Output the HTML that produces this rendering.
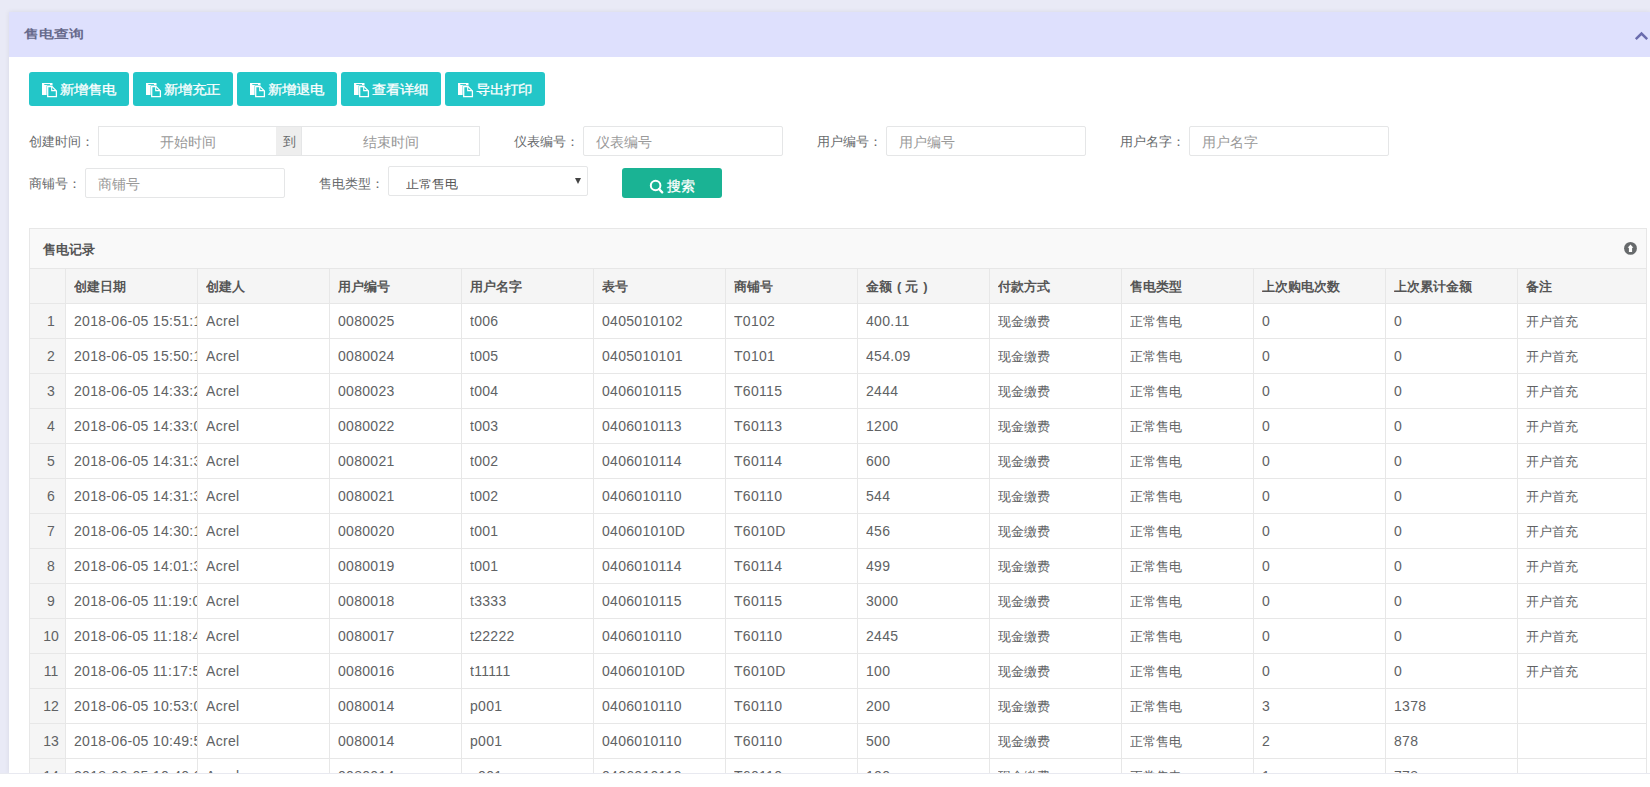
<!DOCTYPE html>
<html><head><meta charset="utf-8">
<style>
*{box-sizing:border-box;margin:0;padding:0}
html,body{width:1650px;height:787px;overflow:hidden;background:#fff;font-family:"Liberation Sans",sans-serif;position:relative}
div,svg{position:absolute}
#bg{left:0;top:0;width:1650px;height:773px;background:#e9eaf6}
#panel{left:9px;top:12px;width:1641px;height:761px;background:#fff;box-shadow:0 0 5px rgba(0,0,0,0.08)}
#phead{left:9px;top:12px;width:1641px;height:45px;background:#dee0fd}
#ptitle{left:24px;top:26px;font-size:14px;font-weight:bold;transform:scale(1.075,0.87);transform-origin:0 0;color:#676a8c;line-height:18px;white-space:nowrap}
#chev{left:1634px;top:31px}
.btn{top:72px;height:34px;width:100px;background:#23c6c8;border-radius:3px;color:#fff;font-size:14px;line-height:34px;white-space:nowrap}
.btn svg{left:12px;top:10px}
.btn span{position:absolute;left:31px;top:1px;-webkit-text-stroke:0.3px #fff;transform:scaleY(0.9);transform-origin:0 50%}
.lbl{font-size:13px;color:#676a6c;line-height:16px;white-space:nowrap}
.inp{height:30px;border-radius:2px;border:1px solid #e5e6e7;background:#fff;font-size:14px;color:#999;line-height:30px;padding-left:12px;white-space:nowrap}
.inp.c{text-align:center;padding-left:0;border-radius:0}
.addon{height:30px;border-top:1px solid #e5e6e7;border-bottom:1px solid #e5e6e7;background:#eee;font-size:13px;color:#676a6c;line-height:29px;text-align:center}
.sel{border-radius:2px;border:1px solid #e5e6e7;background:#fff;overflow:hidden}
.seltxt{position:absolute;left:17px;top:12px;font-size:13px;line-height:16px;color:#555;height:12px;overflow:hidden}
.seltxt b{font-weight:normal;position:relative;top:-3px;display:block;white-space:nowrap}
.arr{position:absolute;left:186px;top:11px;width:0;height:0;border-left:3.5px solid transparent;border-right:3.5px solid transparent;border-top:6px solid #444}
.sbtn{width:100px;height:30px;background:#1ab394;border-radius:3px;color:#fff;font-size:14px;line-height:30px}
.sbtn svg{left:26px;top:9px}
.sbtn span{position:absolute;left:45px;top:3px;-webkit-text-stroke:0.3px #fff}
#tpanel{left:29px;top:228px;width:1618px;height:600px;border:1px solid #e7e7e7;background:#f9f9f9}
#ttitle{left:43px;top:242px;font-size:13px;font-weight:bold;color:#555;line-height:16px;white-space:nowrap}
#upic{left:1623px;top:241px}
.hl{left:29px;width:1618px;height:1px;background:#e7e7e7}
.vl{width:1px;background:#e7e7e7}
.th{height:35px;line-height:37px;font-size:13px;font-weight:bold;color:#555;white-space:nowrap;overflow:hidden}
.td{height:35px;line-height:37px;font-size:14px;color:#606264;letter-spacing:0.3px;white-space:nowrap;overflow:hidden}
.num{height:35px;line-height:37px;font-size:14px;color:#606264;text-align:center}
#white{left:0;top:773px;width:1650px;height:14px;background:#fff;border-top:1px solid #e8e9f0}
.th i{font-style:normal;margin:0 4px 0 5px}
.td.cj{font-size:13px;letter-spacing:0}
</style></head><body>
<div id="bg"></div><div id="panel"></div><div id="phead"></div>
<div id="ptitle">售电查询</div>
<svg id="chev" width="16" height="12" viewBox="0 0 16 12"><path d="M1.8 8.2 L7.5 2.6 L13.2 8.2" fill="none" stroke="#6a6cae" stroke-width="2.5"/></svg>
<div class="btn" style="left:29px"><svg width="18" height="17" viewBox="0 0 18 17"><path d="M1 1h10.5v3H6v9H1z" fill="#fff"/><rect x="3.3" y="2.1" width="5.7" height="0.9" fill="#23c6c8"/><path d="M5.6 3.5h6l4.8 4.8V15.5h-10.8z" fill="#23c6c8"/><path d="M6.7 4.6h4.4l4.3 4.3v5.8H6.7z" fill="none" stroke="#fff" stroke-width="1.3"/><path d="M10.7 4.3v4.3h4.4" fill="none" stroke="#fff" stroke-width="1.1"/></svg><span>新增售电</span></div>
<div class="btn" style="left:133px"><svg width="18" height="17" viewBox="0 0 18 17"><path d="M1 1h10.5v3H6v9H1z" fill="#fff"/><rect x="3.3" y="2.1" width="5.7" height="0.9" fill="#23c6c8"/><path d="M5.6 3.5h6l4.8 4.8V15.5h-10.8z" fill="#23c6c8"/><path d="M6.7 4.6h4.4l4.3 4.3v5.8H6.7z" fill="none" stroke="#fff" stroke-width="1.3"/><path d="M10.7 4.3v4.3h4.4" fill="none" stroke="#fff" stroke-width="1.1"/></svg><span>新增充正</span></div>
<div class="btn" style="left:237px"><svg width="18" height="17" viewBox="0 0 18 17"><path d="M1 1h10.5v3H6v9H1z" fill="#fff"/><rect x="3.3" y="2.1" width="5.7" height="0.9" fill="#23c6c8"/><path d="M5.6 3.5h6l4.8 4.8V15.5h-10.8z" fill="#23c6c8"/><path d="M6.7 4.6h4.4l4.3 4.3v5.8H6.7z" fill="none" stroke="#fff" stroke-width="1.3"/><path d="M10.7 4.3v4.3h4.4" fill="none" stroke="#fff" stroke-width="1.1"/></svg><span>新增退电</span></div>
<div class="btn" style="left:341px"><svg width="18" height="17" viewBox="0 0 18 17"><path d="M1 1h10.5v3H6v9H1z" fill="#fff"/><rect x="3.3" y="2.1" width="5.7" height="0.9" fill="#23c6c8"/><path d="M5.6 3.5h6l4.8 4.8V15.5h-10.8z" fill="#23c6c8"/><path d="M6.7 4.6h4.4l4.3 4.3v5.8H6.7z" fill="none" stroke="#fff" stroke-width="1.3"/><path d="M10.7 4.3v4.3h4.4" fill="none" stroke="#fff" stroke-width="1.1"/></svg><span>查看详细</span></div>
<div class="btn" style="left:445px"><svg width="18" height="17" viewBox="0 0 18 17"><path d="M1 1h10.5v3H6v9H1z" fill="#fff"/><rect x="3.3" y="2.1" width="5.7" height="0.9" fill="#23c6c8"/><path d="M5.6 3.5h6l4.8 4.8V15.5h-10.8z" fill="#23c6c8"/><path d="M6.7 4.6h4.4l4.3 4.3v5.8H6.7z" fill="none" stroke="#fff" stroke-width="1.3"/><path d="M10.7 4.3v4.3h4.4" fill="none" stroke="#fff" stroke-width="1.1"/></svg><span>导出打印</span></div>
<div class="lbl" style="left:29px;top:134px">创建时间：</div>
<div class="inp c" style="left:98px;top:126px;width:179px">开始时间</div>
<div class="addon" style="left:276px;top:126px;width:26px">到</div>
<div class="inp c" style="left:301px;top:126px;width:179px">结束时间</div>
<div class="lbl" style="left:514px;top:134px">仪表编号：</div>
<div class="inp" style="left:583px;top:126px;width:200px">仪表编号</div>
<div class="lbl" style="left:817px;top:134px">用户编号：</div>
<div class="inp" style="left:886px;top:126px;width:200px">用户编号</div>
<div class="lbl" style="left:1120px;top:134px">用户名字：</div>
<div class="inp" style="left:1189px;top:126px;width:200px">用户名字</div>
<div class="lbl" style="left:29px;top:176px">商铺号：</div>
<div class="inp" style="left:85px;top:168px;width:200px">商铺号</div>
<div class="lbl" style="left:319px;top:176px">售电类型：</div>
<div class="sel" style="left:388px;top:166px;width:200px;height:30px"><span class="seltxt"><b>正常售电</b></span><span class="arr"></span></div>
<div class="sbtn" style="left:622px;top:168px"><svg width="18" height="18" viewBox="0 0 18 18"><circle cx="7.6" cy="8.5" r="4.8" fill="none" stroke="#fff" stroke-width="2"/><path d="M11 12l3.2 3.3" stroke="#fff" stroke-width="2.4" stroke-linecap="round"/></svg><span>搜索</span></div>
<div id="tpanel"></div>
<div id="ttitle">售电记录</div>
<svg id="upic" width="16" height="16" viewBox="0 0 16 16"><circle cx="7.5" cy="7.4" r="6.4" fill="#676a6c"/><path d="M7.5 3.5 L10.4 6.8 H9.1 V10.9 H5.9 V6.8 H4.6 Z" fill="#fff"/></svg>
<div style="position:absolute;left:30px;top:268px;width:1616px;height:505px;background:#fff"></div>
<div style="position:absolute;left:30px;top:268px;width:1616px;height:35px;background:#f5f5f5"></div>
<div style="position:absolute;left:30px;top:268px;width:35px;height:505px;background:#f5f5f5"></div>
<div class="hl" style="top:268px"></div>
<div class="hl" style="top:303px"></div>
<div class="hl" style="top:338px"></div>
<div class="hl" style="top:373px"></div>
<div class="hl" style="top:408px"></div>
<div class="hl" style="top:443px"></div>
<div class="hl" style="top:478px"></div>
<div class="hl" style="top:513px"></div>
<div class="hl" style="top:548px"></div>
<div class="hl" style="top:583px"></div>
<div class="hl" style="top:618px"></div>
<div class="hl" style="top:653px"></div>
<div class="hl" style="top:688px"></div>
<div class="hl" style="top:723px"></div>
<div class="hl" style="top:758px"></div>
<div class="vl" style="left:29px;top:268px;height:505px"></div>
<div class="vl" style="left:65px;top:268px;height:505px"></div>
<div class="vl" style="left:197px;top:268px;height:505px"></div>
<div class="vl" style="left:329px;top:268px;height:505px"></div>
<div class="vl" style="left:461px;top:268px;height:505px"></div>
<div class="vl" style="left:593px;top:268px;height:505px"></div>
<div class="vl" style="left:725px;top:268px;height:505px"></div>
<div class="vl" style="left:857px;top:268px;height:505px"></div>
<div class="vl" style="left:989px;top:268px;height:505px"></div>
<div class="vl" style="left:1121px;top:268px;height:505px"></div>
<div class="vl" style="left:1253px;top:268px;height:505px"></div>
<div class="vl" style="left:1385px;top:268px;height:505px"></div>
<div class="vl" style="left:1517px;top:268px;height:505px"></div>
<div class="vl" style="left:1646px;top:268px;height:505px"></div>
<div class="th" style="left:74px;top:268px;width:123px">创建日期</div>
<div class="th" style="left:206px;top:268px;width:123px">创建人</div>
<div class="th" style="left:338px;top:268px;width:123px">用户编号</div>
<div class="th" style="left:470px;top:268px;width:123px">用户名字</div>
<div class="th" style="left:602px;top:268px;width:123px">表号</div>
<div class="th" style="left:734px;top:268px;width:123px">商铺号</div>
<div class="th" style="left:866px;top:268px;width:123px">金额<i>(</i>元<i>)</i></div>
<div class="th" style="left:998px;top:268px;width:123px">付款方式</div>
<div class="th" style="left:1130px;top:268px;width:123px">售电类型</div>
<div class="th" style="left:1262px;top:268px;width:123px">上次购电次数</div>
<div class="th" style="left:1394px;top:268px;width:123px">上次累计金额</div>
<div class="th" style="left:1526px;top:268px;width:120px">备注</div>
<div class="num" style="left:37px;top:303px;width:28px">1</div>
<div class="td" style="left:74px;top:303px;width:123px">2018-06-05 15:51:1</div>
<div class="td" style="left:206px;top:303px;width:123px">Acrel</div>
<div class="td" style="left:338px;top:303px;width:123px">0080025</div>
<div class="td" style="left:470px;top:303px;width:123px">t006</div>
<div class="td" style="left:602px;top:303px;width:123px">0405010102</div>
<div class="td" style="left:734px;top:303px;width:123px">T0102</div>
<div class="td" style="left:866px;top:303px;width:123px">400.11</div>
<div class="td cj" style="left:998px;top:303px;width:123px">现金缴费</div>
<div class="td cj" style="left:1130px;top:303px;width:123px">正常售电</div>
<div class="td" style="left:1262px;top:303px;width:123px">0</div>
<div class="td" style="left:1394px;top:303px;width:123px">0</div>
<div class="td cj" style="left:1526px;top:303px;width:120px">开户首充</div>
<div class="num" style="left:37px;top:338px;width:28px">2</div>
<div class="td" style="left:74px;top:338px;width:123px">2018-06-05 15:50:1</div>
<div class="td" style="left:206px;top:338px;width:123px">Acrel</div>
<div class="td" style="left:338px;top:338px;width:123px">0080024</div>
<div class="td" style="left:470px;top:338px;width:123px">t005</div>
<div class="td" style="left:602px;top:338px;width:123px">0405010101</div>
<div class="td" style="left:734px;top:338px;width:123px">T0101</div>
<div class="td" style="left:866px;top:338px;width:123px">454.09</div>
<div class="td cj" style="left:998px;top:338px;width:123px">现金缴费</div>
<div class="td cj" style="left:1130px;top:338px;width:123px">正常售电</div>
<div class="td" style="left:1262px;top:338px;width:123px">0</div>
<div class="td" style="left:1394px;top:338px;width:123px">0</div>
<div class="td cj" style="left:1526px;top:338px;width:120px">开户首充</div>
<div class="num" style="left:37px;top:373px;width:28px">3</div>
<div class="td" style="left:74px;top:373px;width:123px">2018-06-05 14:33:2</div>
<div class="td" style="left:206px;top:373px;width:123px">Acrel</div>
<div class="td" style="left:338px;top:373px;width:123px">0080023</div>
<div class="td" style="left:470px;top:373px;width:123px">t004</div>
<div class="td" style="left:602px;top:373px;width:123px">0406010115</div>
<div class="td" style="left:734px;top:373px;width:123px">T60115</div>
<div class="td" style="left:866px;top:373px;width:123px">2444</div>
<div class="td cj" style="left:998px;top:373px;width:123px">现金缴费</div>
<div class="td cj" style="left:1130px;top:373px;width:123px">正常售电</div>
<div class="td" style="left:1262px;top:373px;width:123px">0</div>
<div class="td" style="left:1394px;top:373px;width:123px">0</div>
<div class="td cj" style="left:1526px;top:373px;width:120px">开户首充</div>
<div class="num" style="left:37px;top:408px;width:28px">4</div>
<div class="td" style="left:74px;top:408px;width:123px">2018-06-05 14:33:0</div>
<div class="td" style="left:206px;top:408px;width:123px">Acrel</div>
<div class="td" style="left:338px;top:408px;width:123px">0080022</div>
<div class="td" style="left:470px;top:408px;width:123px">t003</div>
<div class="td" style="left:602px;top:408px;width:123px">0406010113</div>
<div class="td" style="left:734px;top:408px;width:123px">T60113</div>
<div class="td" style="left:866px;top:408px;width:123px">1200</div>
<div class="td cj" style="left:998px;top:408px;width:123px">现金缴费</div>
<div class="td cj" style="left:1130px;top:408px;width:123px">正常售电</div>
<div class="td" style="left:1262px;top:408px;width:123px">0</div>
<div class="td" style="left:1394px;top:408px;width:123px">0</div>
<div class="td cj" style="left:1526px;top:408px;width:120px">开户首充</div>
<div class="num" style="left:37px;top:443px;width:28px">5</div>
<div class="td" style="left:74px;top:443px;width:123px">2018-06-05 14:31:3</div>
<div class="td" style="left:206px;top:443px;width:123px">Acrel</div>
<div class="td" style="left:338px;top:443px;width:123px">0080021</div>
<div class="td" style="left:470px;top:443px;width:123px">t002</div>
<div class="td" style="left:602px;top:443px;width:123px">0406010114</div>
<div class="td" style="left:734px;top:443px;width:123px">T60114</div>
<div class="td" style="left:866px;top:443px;width:123px">600</div>
<div class="td cj" style="left:998px;top:443px;width:123px">现金缴费</div>
<div class="td cj" style="left:1130px;top:443px;width:123px">正常售电</div>
<div class="td" style="left:1262px;top:443px;width:123px">0</div>
<div class="td" style="left:1394px;top:443px;width:123px">0</div>
<div class="td cj" style="left:1526px;top:443px;width:120px">开户首充</div>
<div class="num" style="left:37px;top:478px;width:28px">6</div>
<div class="td" style="left:74px;top:478px;width:123px">2018-06-05 14:31:3</div>
<div class="td" style="left:206px;top:478px;width:123px">Acrel</div>
<div class="td" style="left:338px;top:478px;width:123px">0080021</div>
<div class="td" style="left:470px;top:478px;width:123px">t002</div>
<div class="td" style="left:602px;top:478px;width:123px">0406010110</div>
<div class="td" style="left:734px;top:478px;width:123px">T60110</div>
<div class="td" style="left:866px;top:478px;width:123px">544</div>
<div class="td cj" style="left:998px;top:478px;width:123px">现金缴费</div>
<div class="td cj" style="left:1130px;top:478px;width:123px">正常售电</div>
<div class="td" style="left:1262px;top:478px;width:123px">0</div>
<div class="td" style="left:1394px;top:478px;width:123px">0</div>
<div class="td cj" style="left:1526px;top:478px;width:120px">开户首充</div>
<div class="num" style="left:37px;top:513px;width:28px">7</div>
<div class="td" style="left:74px;top:513px;width:123px">2018-06-05 14:30:1</div>
<div class="td" style="left:206px;top:513px;width:123px">Acrel</div>
<div class="td" style="left:338px;top:513px;width:123px">0080020</div>
<div class="td" style="left:470px;top:513px;width:123px">t001</div>
<div class="td" style="left:602px;top:513px;width:123px">040601010D</div>
<div class="td" style="left:734px;top:513px;width:123px">T6010D</div>
<div class="td" style="left:866px;top:513px;width:123px">456</div>
<div class="td cj" style="left:998px;top:513px;width:123px">现金缴费</div>
<div class="td cj" style="left:1130px;top:513px;width:123px">正常售电</div>
<div class="td" style="left:1262px;top:513px;width:123px">0</div>
<div class="td" style="left:1394px;top:513px;width:123px">0</div>
<div class="td cj" style="left:1526px;top:513px;width:120px">开户首充</div>
<div class="num" style="left:37px;top:548px;width:28px">8</div>
<div class="td" style="left:74px;top:548px;width:123px">2018-06-05 14:01:3</div>
<div class="td" style="left:206px;top:548px;width:123px">Acrel</div>
<div class="td" style="left:338px;top:548px;width:123px">0080019</div>
<div class="td" style="left:470px;top:548px;width:123px">t001</div>
<div class="td" style="left:602px;top:548px;width:123px">0406010114</div>
<div class="td" style="left:734px;top:548px;width:123px">T60114</div>
<div class="td" style="left:866px;top:548px;width:123px">499</div>
<div class="td cj" style="left:998px;top:548px;width:123px">现金缴费</div>
<div class="td cj" style="left:1130px;top:548px;width:123px">正常售电</div>
<div class="td" style="left:1262px;top:548px;width:123px">0</div>
<div class="td" style="left:1394px;top:548px;width:123px">0</div>
<div class="td cj" style="left:1526px;top:548px;width:120px">开户首充</div>
<div class="num" style="left:37px;top:583px;width:28px">9</div>
<div class="td" style="left:74px;top:583px;width:123px">2018-06-05 11:19:0</div>
<div class="td" style="left:206px;top:583px;width:123px">Acrel</div>
<div class="td" style="left:338px;top:583px;width:123px">0080018</div>
<div class="td" style="left:470px;top:583px;width:123px">t3333</div>
<div class="td" style="left:602px;top:583px;width:123px">0406010115</div>
<div class="td" style="left:734px;top:583px;width:123px">T60115</div>
<div class="td" style="left:866px;top:583px;width:123px">3000</div>
<div class="td cj" style="left:998px;top:583px;width:123px">现金缴费</div>
<div class="td cj" style="left:1130px;top:583px;width:123px">正常售电</div>
<div class="td" style="left:1262px;top:583px;width:123px">0</div>
<div class="td" style="left:1394px;top:583px;width:123px">0</div>
<div class="td cj" style="left:1526px;top:583px;width:120px">开户首充</div>
<div class="num" style="left:37px;top:618px;width:28px">10</div>
<div class="td" style="left:74px;top:618px;width:123px">2018-06-05 11:18:4</div>
<div class="td" style="left:206px;top:618px;width:123px">Acrel</div>
<div class="td" style="left:338px;top:618px;width:123px">0080017</div>
<div class="td" style="left:470px;top:618px;width:123px">t22222</div>
<div class="td" style="left:602px;top:618px;width:123px">0406010110</div>
<div class="td" style="left:734px;top:618px;width:123px">T60110</div>
<div class="td" style="left:866px;top:618px;width:123px">2445</div>
<div class="td cj" style="left:998px;top:618px;width:123px">现金缴费</div>
<div class="td cj" style="left:1130px;top:618px;width:123px">正常售电</div>
<div class="td" style="left:1262px;top:618px;width:123px">0</div>
<div class="td" style="left:1394px;top:618px;width:123px">0</div>
<div class="td cj" style="left:1526px;top:618px;width:120px">开户首充</div>
<div class="num" style="left:37px;top:653px;width:28px">11</div>
<div class="td" style="left:74px;top:653px;width:123px">2018-06-05 11:17:5</div>
<div class="td" style="left:206px;top:653px;width:123px">Acrel</div>
<div class="td" style="left:338px;top:653px;width:123px">0080016</div>
<div class="td" style="left:470px;top:653px;width:123px">t11111</div>
<div class="td" style="left:602px;top:653px;width:123px">040601010D</div>
<div class="td" style="left:734px;top:653px;width:123px">T6010D</div>
<div class="td" style="left:866px;top:653px;width:123px">100</div>
<div class="td cj" style="left:998px;top:653px;width:123px">现金缴费</div>
<div class="td cj" style="left:1130px;top:653px;width:123px">正常售电</div>
<div class="td" style="left:1262px;top:653px;width:123px">0</div>
<div class="td" style="left:1394px;top:653px;width:123px">0</div>
<div class="td cj" style="left:1526px;top:653px;width:120px">开户首充</div>
<div class="num" style="left:37px;top:688px;width:28px">12</div>
<div class="td" style="left:74px;top:688px;width:123px">2018-06-05 10:53:0</div>
<div class="td" style="left:206px;top:688px;width:123px">Acrel</div>
<div class="td" style="left:338px;top:688px;width:123px">0080014</div>
<div class="td" style="left:470px;top:688px;width:123px">p001</div>
<div class="td" style="left:602px;top:688px;width:123px">0406010110</div>
<div class="td" style="left:734px;top:688px;width:123px">T60110</div>
<div class="td" style="left:866px;top:688px;width:123px">200</div>
<div class="td cj" style="left:998px;top:688px;width:123px">现金缴费</div>
<div class="td cj" style="left:1130px;top:688px;width:123px">正常售电</div>
<div class="td" style="left:1262px;top:688px;width:123px">3</div>
<div class="td" style="left:1394px;top:688px;width:123px">1378</div>
<div class="td cj" style="left:1526px;top:688px;width:120px"></div>
<div class="num" style="left:37px;top:723px;width:28px">13</div>
<div class="td" style="left:74px;top:723px;width:123px">2018-06-05 10:49:5</div>
<div class="td" style="left:206px;top:723px;width:123px">Acrel</div>
<div class="td" style="left:338px;top:723px;width:123px">0080014</div>
<div class="td" style="left:470px;top:723px;width:123px">p001</div>
<div class="td" style="left:602px;top:723px;width:123px">0406010110</div>
<div class="td" style="left:734px;top:723px;width:123px">T60110</div>
<div class="td" style="left:866px;top:723px;width:123px">500</div>
<div class="td cj" style="left:998px;top:723px;width:123px">现金缴费</div>
<div class="td cj" style="left:1130px;top:723px;width:123px">正常售电</div>
<div class="td" style="left:1262px;top:723px;width:123px">2</div>
<div class="td" style="left:1394px;top:723px;width:123px">878</div>
<div class="td cj" style="left:1526px;top:723px;width:120px"></div>
<div class="num" style="left:37px;top:758px;width:28px">14</div>
<div class="td" style="left:74px;top:758px;width:123px">2018-06-05 10:40:6</div>
<div class="td" style="left:206px;top:758px;width:123px">Acrel</div>
<div class="td" style="left:338px;top:758px;width:123px">0080014</div>
<div class="td" style="left:470px;top:758px;width:123px">p001</div>
<div class="td" style="left:602px;top:758px;width:123px">0406010110</div>
<div class="td" style="left:734px;top:758px;width:123px">T60110</div>
<div class="td" style="left:866px;top:758px;width:123px">100</div>
<div class="td cj" style="left:998px;top:758px;width:123px">现金缴费</div>
<div class="td cj" style="left:1130px;top:758px;width:123px">正常售电</div>
<div class="td" style="left:1262px;top:758px;width:123px">1</div>
<div class="td" style="left:1394px;top:758px;width:123px">778</div>
<div class="td cj" style="left:1526px;top:758px;width:120px"></div>
<div id="white"></div>
</body></html>
